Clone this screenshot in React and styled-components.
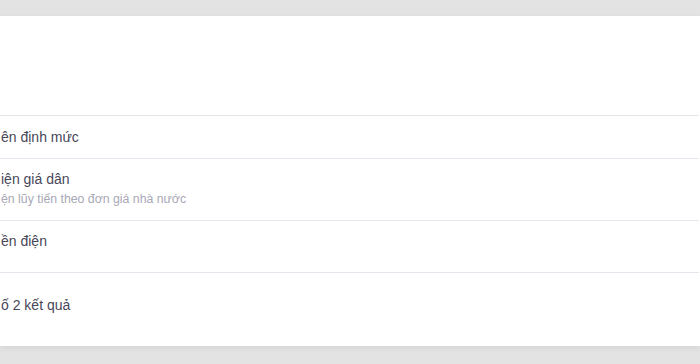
import React from "react";
import styled, { createGlobalStyle } from "styled-components";

const GlobalStyle = createGlobalStyle`
  html, body {
    margin: 0;
    padding: 0;
    background: #e3e3e3;
  }
  body {
    font-family: "Liberation Sans", Arial, sans-serif;
    -webkit-font-smoothing: antialiased;
  }
`;

const Page = styled.div`
  padding: 16px 0 18px;
`;

const Panel = styled.div`
  background: #ffffff;
  height: 330px;
  box-shadow: 0 2px 6px rgba(0, 0, 0, 0.07);
  display: flex;
  flex-direction: column;
`;

const Header = styled.div`
  height: 99px;
  border-bottom: 1px solid #e4e4ea;
  margin-right: 1px;
`;

const Row = styled.div`
  display: flex;
  flex-direction: column;
  gap: 2px;
  height: ${(p) => p.$h}px;
  padding: ${(p) => p.$top}px 0 0 1px;
  box-sizing: border-box;
  margin-right: 1px;
  border-bottom: ${(p) => (p.$last ? "none" : "1px solid #e6e6ee")};
`;

const Title = styled.div`
  font-size: 14px;
  line-height: 20px;
  color: #474758;
  white-space: nowrap;
`;

const Hint = styled.div`
  font-size: 12.3px;
  line-height: 16px;
  color: #a8a8b6;
  white-space: nowrap;
`;

const rows = [
  { title: "ên định mức", h: 43, top: 11 },
  { title: "iện giá dân", hint: "ện lũy tiến theo đơn giá nhà nước", h: 62, top: 10 },
  { title: "ền điện", h: 52, top: 10 },
  { title: "ố 2 kết quả", h: 73, top: 22, last: true },
];

export default function App() {
  return (
    <>
      <GlobalStyle />
      <Page>
        <Panel>
          <Header />
          {rows.map((r) => (
            <Row key={r.title} $h={r.h} $top={r.top} $last={r.last}>
              <Title>{r.title}</Title>
              {r.hint && <Hint>{r.hint}</Hint>}
            </Row>
          ))}
        </Panel>
      </Page>
    </>
  );
}
